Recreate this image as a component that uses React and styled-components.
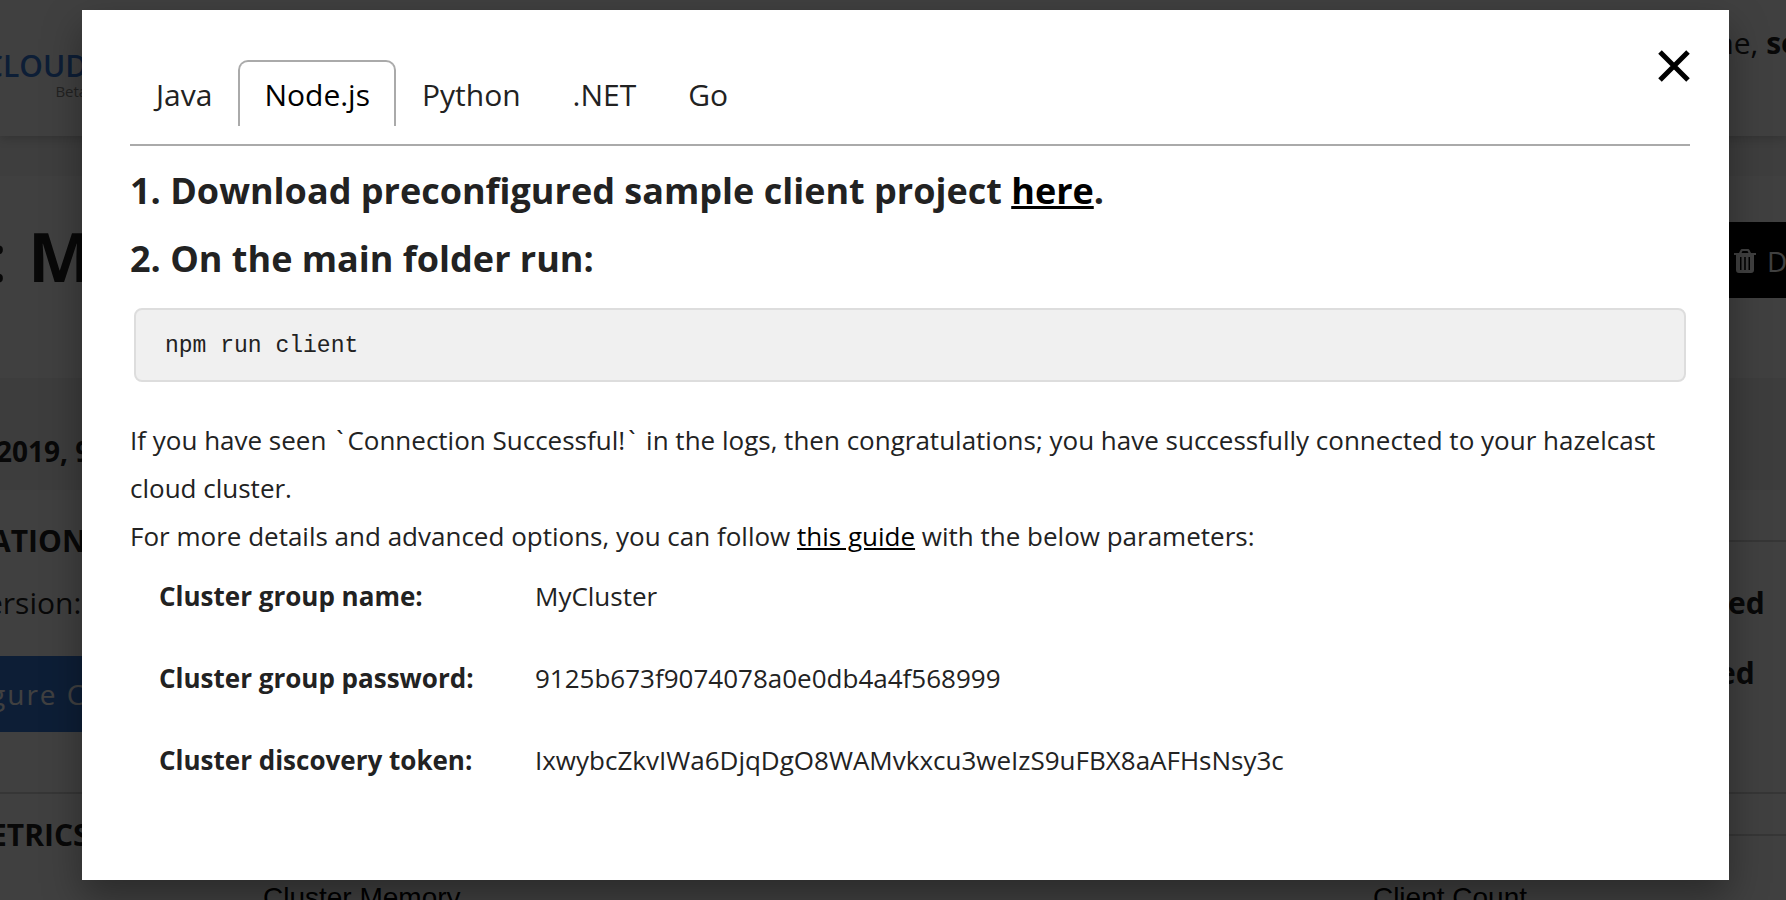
import React, { useState } from "react";
import styled, { createGlobalStyle } from "styled-components";

const GlobalStyle = createGlobalStyle`
  *, *::before, *::after { box-sizing: border-box; }
  html, body { margin: 0; height: 100%; overflow: hidden; }
  body {
    font-family: "Open Sans", "Noto Sans", sans-serif;
    font-size: 30px;
    color: #222;
    background: #fff;
  }
  #root { height: 100%; }
`;

const Screen = styled.div`
  position: relative;
  height: 100vh;
  overflow: hidden;
`;

const Dashboard = styled.div`
  white-space: nowrap;
  line-height: 40px;
`;

const SplitRow = styled.div`
  display: flex;
  justify-content: space-between;
  align-items: flex-start;
`;

const Header = styled(SplitRow)`
  position: relative;
  height: 136px;
  padding-top: 23px;
  background: #fff;
  box-shadow: 0 2px 10px rgba(0, 0, 0, 0.2);
`;

const Logo = styled.div`
  display: flex;
  flex-direction: column;
  align-items: flex-end;
  margin-left: -16px;
  padding-top: 26px;
  font-weight: 600;
  line-height: 34px;
  color: #3478d8;
`;

const Beta = styled.span`
  font-size: 15px;
  font-weight: 400;
  line-height: 16px;
  color: #888;
`;

const Welcome = styled.span`
  width: 80px;
`;

const Strip = styled.div`
  height: 40px;
  background: #f5f5f5;
`;

const TitleRow = styled(SplitRow)`
  height: 202px;
  padding-top: 46px;
`;

const Title = styled.h1`
  display: flex;
  gap: 20px;
  margin: 0 0 0 -10px;
  font-size: 68px;
  line-height: 68px;
  font-weight: 400;
`;

const DeleteButton = styled.button`
  display: flex;
  align-items: center;
  gap: 11px;
  height: 76px;
  width: 80px;
  padding: 1px 0 0 28px;
  border: 0;
  background: #000;
  color: #fff;
  font: inherit;
  font-size: 28px;
  overflow: hidden;

  svg { flex: none; }
`;

const DateBand = styled.div`
  height: 112px;
  padding-top: 53px;
  background: #f2f2f2;
  font-size: 28px;
  font-weight: 700;
  text-indent: -4px;
`;

const Columns = styled.div`
  display: grid;
  grid-template-columns: 1fr 70px;
`;

const SectionTitle = styled.h2`
  margin: 0 0 0 -10px;
  font-size: 30px;
  line-height: 40px;
  font-weight: 700;
`;

const Info = styled.div`
  height: 304px;
  padding-top: 31px;
  border-bottom: 2px solid #d8d8d8;
`;

const Version = styled.div`
  margin: 22px 0 0 -14px;
`;

const ConfigureButton = styled.button`
  display: block;
  width: 200px;
  height: 76px;
  margin-top: 33px;
  padding: 0;
  border: 0;
  background: #3478d8;
  color: #fff;
  font: inherit;
  font-size: 28px;
  letter-spacing: 2px;
  text-align: left;
  text-indent: -10px;
`;

const States = styled.div`
  height: 304px;
  padding-top: 50px;
  border-bottom: 2px solid #d8d8d8;
`;

const StateList = styled.div`
  display: grid;
  row-gap: 30px;
  border-top: 2px solid #d8d8d8;
  padding-top: 41px;
  font-weight: 700;
`;

const State = styled.span`
  padding-left: ${(p) => (p.$wide ? "12px" : "2px")};
`;

const Metrics = styled.div`
  display: grid;
  grid-template-columns: 1fr 70px;
  align-items: start;
  height: 42px;
`;

const MetricsTitle = styled(SectionTitle)`
  padding-top: 21px;
`;

const MetricsRule = styled.div`
  height: 42px;
  border-bottom: 2px solid #d8d8d8;
`;

const Charts = styled.div`
  display: flex;
  justify-content: space-between;
  padding: 42px 259px 0 263px;
  font-family: "Liberation Sans", Arial, sans-serif;
  font-size: 28px;
  color: #000;
`;

const Backdrop = styled.div`
  position: absolute;
  inset: 0;
  padding: 10px 57px 20px 82px;
  background: rgba(0, 0, 0, 0.75);
`;

const Modal = styled.div`
  position: relative;
  height: 100%;
  padding: 50px 39px 0 48px;
  background: #fff;
  box-shadow: 0 16px 36px rgba(0, 0, 0, 0.35);
`;

const CloseButton = styled.button`
  position: absolute;
  top: 38px;
  right: 37px;
  padding: 0;
  border: 0;
  background: none;
  color: #000;
  cursor: pointer;

  svg { display: block; }
`;

const TabBar = styled.div`
  display: flex;
  padding-bottom: 18px;
  border-bottom: 2px solid #aaa;
`;

const Tab = styled.button`
  height: 66px;
  padding: 2px 24px 0;
  border: 2px solid ${(p) => (p.$active ? "#aaa" : "transparent")};
  border-bottom: 0;
  border-radius: 10px 10px 0 0;
  background: none;
  color: ${(p) => (p.$active ? "#000" : "#222")};
  font: inherit;
  line-height: 40px;
  cursor: pointer;
`;

const Step = styled.h3`
  margin: 0;
  font-size: 36px;
  line-height: 68px;
  font-weight: 700;
`;

const Link = styled.a`
  color: #000;
  text-decoration: underline;
`;

const Steps = styled.div`
  padding-top: 11px;
`;

const Code = styled.pre`
  margin: 15px 4px 0;
  padding: 18px 28px 16px 29px;
  border: 2px solid #ddd;
  border-radius: 8px;
  background: #f0f0f0;
  font-family: "Liberation Mono", "Courier New", monospace;
  font-size: 23px;
  line-height: 36px;
`;

const Notes = styled.div`
  margin-top: 34px;
  font-size: 26px;
  line-height: 48px;

  p { margin: 0; }
`;

const Tick = styled.span`
  padding: 0 4px 0 3px;
`;

const Params = styled.table`
  border-collapse: collapse;
  font-size: 26px;
  line-height: 36px;

  th, td {
    height: 82px;
    padding: 18px 0 0 29px;
    text-align: left;
    vertical-align: top;
  }

  th { width: 376px; font-weight: 700; }
`;

const TABS = ["Java", "Node.js", "Python", ".NET", "Go"];

const PARAMS = [
  ["Cluster group name:", "MyCluster"],
  ["Cluster group password:", "9125b673f9074078a0e0db4a4f568999"],
  ["Cluster discovery token:", "IxwybcZkvIWa6DjqDgO8WAMvkxcu3weIzS9uFBX8aAFHsNsy3c"],
];

function TrashIcon() {
  return (
    <svg width="22" height="24" viewBox="0 0 22 24" fill="currentColor" aria-hidden="true">
      <path
        fillRule="evenodd"
        d="M8 0h6q1 0 1.500 1L17 4h5v2h-2v15q0 3-3 3H5q-3 0-3-3V6H0V4h5l1.500-3Q7 0 8 0zM8.500 2L7.500 4h7l-1-2zM6 8v13h1.500V8zM10.200 8v13h1.600V8zM14.500 8v13H16V8z"
      />
    </svg>
  );
}

export default function App() {
  const [active, setActive] = useState("Node.js");
  return (
    <Screen>
      <GlobalStyle />
      <Dashboard>
        <Header>
          <Logo>
            CLOUD
            <Beta>Beta</Beta>
          </Logo>
          <Welcome>
            me, <b>se</b>
          </Welcome>
        </Header>
        <Strip />
        <TitleRow>
          <Title>
            <span>:</span>
            <b>M</b>
          </Title>
          <DeleteButton>
            <TrashIcon />D
          </DeleteButton>
        </TitleRow>
        <DateBand>2019, 9</DateBand>
        <Columns>
          <Info>
            <SectionTitle>ATION</SectionTitle>
            <Version>ersion:</Version>
            <ConfigureButton>gure C</ConfigureButton>
          </Info>
          <States>
            <StateList>
              <State $wide>ed</State>
              <State>ed</State>
            </StateList>
          </States>
        </Columns>
        <Metrics>
          <MetricsTitle>ETRICS</MetricsTitle>
          <MetricsRule />
        </Metrics>
        <Charts>
          <span>Cluster Memory</span>
          <span>Client Count</span>
        </Charts>
      </Dashboard>
      <Backdrop>
        <Modal role="dialog" aria-label="Connect client">
          <CloseButton aria-label="Close">
            <svg width="36" height="40" viewBox="0 0 36 40" fill="none" stroke="currentColor" strokeWidth="5" aria-hidden="true">
              <path d="M4 4l28 28M32 4L4 32" />
            </svg>
          </CloseButton>
          <TabBar role="tablist">
            {TABS.map((name) => (
              <Tab key={name} role="tab" aria-selected={name === active} $active={name === active} onClick={() => setActive(name)}>
                {name}
              </Tab>
            ))}
          </TabBar>
          <Steps>
            <Step>
              1. Download preconfigured sample client project <Link href="#download">here</Link>.
            </Step>
            <Step>2. On the main folder run:</Step>
          </Steps>
          <Code>npm run client</Code>
          <Notes>
            <p>
              If you have seen <Tick>`</Tick>Connection Successful!<Tick>`</Tick> in the logs, then congratulations;
              you have successfully connected to your hazelcast cloud cluster.
            </p>
            <p>
              For more details and advanced options, you can follow <Link href="#guide">this guide</Link> with the
              below parameters:
            </p>
          </Notes>
          <Params>
            <tbody>
              {PARAMS.map(([label, value]) => (
                <tr key={label}>
                  <th scope="row">{label}</th>
                  <td>{value}</td>
                </tr>
              ))}
            </tbody>
          </Params>
        </Modal>
      </Backdrop>
    </Screen>
  );
}
